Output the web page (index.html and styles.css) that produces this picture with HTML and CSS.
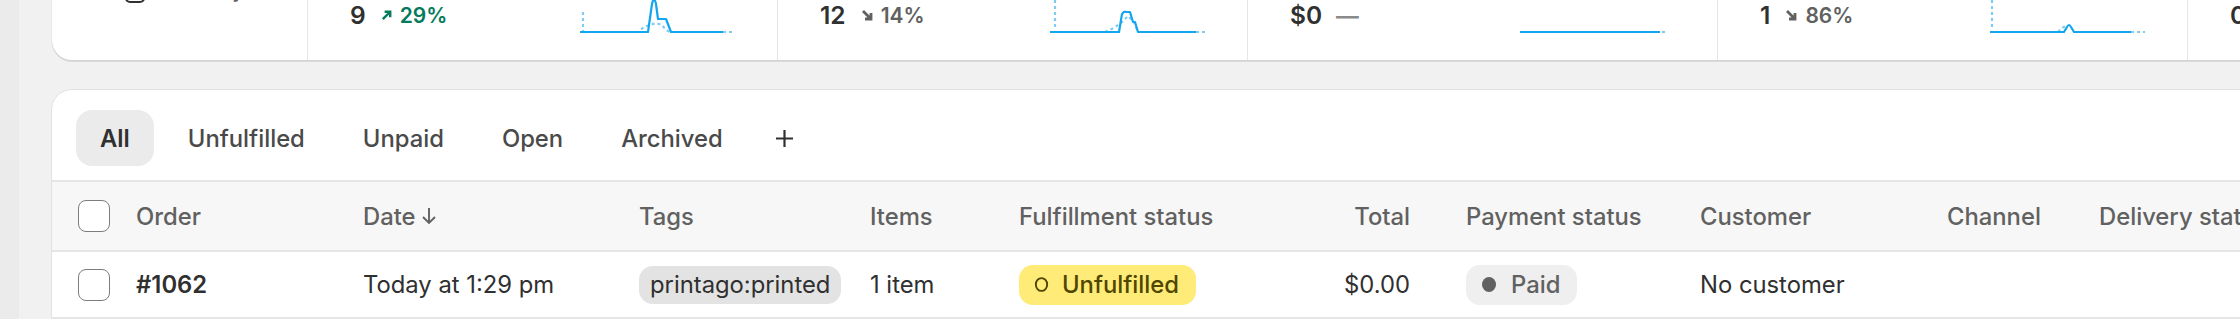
FILE: index.html
```html
<!DOCTYPE html>
<html lang="en">
<head>
<meta charset="utf-8">
<title>Orders</title>
<link rel="stylesheet" href="styles.css">
</head>
<body>
<div class="page">
  <div class="rail"></div>
  <main class="main">
    <section class="card stats">
      <div class="stat first">
        <div class="picker">
          <svg class="cal" viewBox="0 0 22 24" width="22" height="24"><rect x="2" y="3" width="18" height="19" rx="4" fill="none" stroke="#303030" stroke-width="2.2"/></svg>
          <span>Today</span>
        </div>
      </div>
      <div class="stat">
        <div class="figure"><span class="num">9</span><span class="delta up"><svg viewBox="0 0 14 14" width="13" height="13"><path d="M3 11 L10.5 3.5 M5 3 H11 V9" fill="none" stroke="currentColor" stroke-width="2.6"/></svg>29%</span></div>
        <svg class="spark" viewBox="0 0 155 44" width="155" height="44">
          <path class="cmp" d="M3 20 V40"/>
          <path class="cmp" d="M50 40 L58 40 L64 35 L70 33 L76 31 L82 33 L86 38 L90 40"/>
          <path class="cmp" d="M143 40 H155"/>
          <path class="line" d="M0 40 H68 L72 12 Q74 3 76 12 L78 27 H86 L91 40 H143"/>
        </svg>
      </div>
      <div class="stat">
        <div class="figure"><span class="num">12</span><span class="delta down"><svg viewBox="0 0 14 14" width="14" height="14"><path d="M3 3 L10.5 10.5 M11 5 V11 H5" fill="none" stroke="currentColor" stroke-width="2.8"/></svg>14%</span></div>
        <svg class="spark" viewBox="0 0 155 44" width="155" height="44">
          <path class="cmp" d="M5 8 V38"/>
          <path class="cmp" d="M55 40 L64 36 L72 30 L78 24 L84 30 L88 40"/>
          <path class="cmp" d="M146 40 H155"/>
          <path class="line" d="M0 40 H69 L72 22 Q74 19 76 20 H80 L83 30 H85 L88 40 H146"/>
        </svg>
      </div>
      <div class="stat">
        <div class="figure"><span class="num">$0</span><span class="delta flat">—</span></div>
        <svg class="spark" viewBox="0 0 155 44" width="155" height="44">
          <path class="cmp" d="M142 40 H147"/>
          <path class="line" d="M0 40 H140"/>
        </svg>
      </div>
      <div class="stat">
        <div class="figure"><span class="num">1</span><span class="delta down"><svg viewBox="0 0 14 14" width="14" height="14"><path d="M3 3 L10.5 10.5 M11 5 V11 H5" fill="none" stroke="currentColor" stroke-width="2.8"/></svg>86%</span></div>
        <svg class="spark" viewBox="0 0 155 44" width="155" height="44">
          <path class="cmp" d="M2 8 V38"/>
          <path class="cmp" d="M68 40 L72 36 L76 34"/>
          <path class="cmp" d="M141 40 H155"/>
          <path class="line" d="M0 40 H74 L77 35 Q79 31 81 35 L84 40 H141"/>
        </svg>
      </div>
      <div class="stat">
        <div class="figure"><span class="num">0</span></div>
      </div>
    </section>

    <section class="card orders">
      <div class="tabs">
        <div class="tab active">All</div>
        <div class="tab">Unfulfilled</div>
        <div class="tab">Unpaid</div>
        <div class="tab">Open</div>
        <div class="tab">Archived</div>
        <div class="tab add"><svg viewBox="0 0 21 21" width="21" height="21"><path d="M10.5 2 V19 M2 10.5 H19" fill="none" stroke="#303030" stroke-width="2.2"/></svg></div>
      </div>
      <div class="row head">
        <div class="cell check"><span class="box"></span></div>
        <div class="cell">Order</div>
        <div class="cell">Date<svg class="sort" viewBox="0 0 16 20" width="16" height="20"><path d="M8 2 V17 M2 11 L8 17 L14 11" fill="none" stroke="#616161" stroke-width="1.9"/></svg></div>
        <div class="cell">Tags</div>
        <div class="cell">Items</div>
        <div class="cell">Fulfillment status</div>
        <div class="cell num-col">Total</div>
        <div class="cell">Payment status</div>
        <div class="cell">Customer</div>
        <div class="cell">Channel</div>
        <div class="cell">Delivery status</div>
      </div>
      <div class="row body">
        <div class="cell check"><span class="box"></span></div>
        <div class="cell strong">#1062</div>
        <div class="cell">Today at 1:29 pm</div>
        <div class="cell"><span class="tag">printago:printed</span></div>
        <div class="cell">1 item</div>
        <div class="cell"><span class="badge warn"><svg viewBox="0 0 18 18" width="17" height="17"><ellipse cx="9" cy="9" rx="6" ry="6.8" fill="none" stroke="#4f4700" stroke-width="2"/></svg>Unfulfilled</span></div>
        <div class="cell num-col">$0.00</div>
        <div class="cell"><span class="badge paid"><span class="dot"></span>Paid</span></div>
        <div class="cell">No customer</div>
        <div class="cell"></div>
        <div class="cell"></div>
      </div>
    </section>
  </main>
</div>
</body>
</html>
```

FILE: styles.css
```css
* { box-sizing: border-box; margin: 0; padding: 0; }
html, body { width: 2240px; height: 319px; overflow: hidden; }
body {
  background: #f1f1f1;
  font-family: Inter, "Noto Sans", sans-serif;
  font-size: 23.8px;
  color: #303030;
}
.page { display: flex; height: 319px; }
.rail { width: 19px; flex: none; background: #ebebeb; }
.main { flex: 1; min-width: 0; padding-left: 33px; display: flex; flex-direction: column; }

.card { background: #fff; border-radius: 20px; width: 2260px; flex: none; }

/* stats */
.stats {
  margin-top: -62px;
  height: 122px;
  display: flex;
  font-size: 22.75px;
  box-shadow: 0 2px 0 rgba(0,0,0,0.09), 0 0 0 1px rgba(0,0,0,0.04);
}
.stat {
  flex: none;
  width: 470px;
  border-left: 1px solid #e6e6e6;
  display: flex;
  align-items: flex-end;
  padding: 0 0 24px 42px;
}
.stat.first { width: 255px; border-left: 0; align-items: flex-start; padding: 36px 0 0 72px; }
.picker { display: flex; align-items: flex-end; gap: 33px; height: 30px; color: #616161; line-height: 30px; }
.cal { flex: none; }
.figure { display: flex; align-items: center; height: 30px; margin-bottom: 6px; }
.num { font-size: 24.5px; font-weight: 600; color: #303030; margin-right: 14px; }
.delta { display: flex; align-items: center; gap: 7px; font-weight: 600; font-size: 21px; }
.delta.up { color: #047b5d; }
.delta.down { color: #616161; }
.delta.flat { color: #8a8a8a; font-size: 22.75px; }
.spark { flex: none; margin-left: auto; margin-right: 42px; overflow: visible; }
.spark .line { fill: none; stroke: #14a5ef; stroke-width: 2.2; stroke-linejoin: round; }
.spark .cmp { fill: none; stroke: #7fcbf3; stroke-width: 2.2; stroke-dasharray: 3 3; }

/* orders card */
.orders {
  margin-top: 30px;
  border-radius: 20px 20px 0 0;
  box-shadow: 0 0 0 1px rgba(0,0,0,0.06);
  overflow: hidden;
}
.tabs {
  display: flex;
  align-items: center;
  gap: 10px;
  height: 92px;
  padding: 6px 0 0 24px;
  border-bottom: 2px solid #e6e6e6;
}
.tab {
  height: 56px;
  padding: 0 24px;
  border-radius: 16px;
  display: flex;
  align-items: center;
  font-weight: 500;
  color: #4a4a4a;
}
.tab.active { background: #ebebeb; color: #303030; font-weight: 600; }
.tab.add { padding: 0 8px 0 17px; }

.row {
  display: grid;
  grid-template-columns: 84px 227px 276px 231px 149px 231px 216px 234px 247px 152px 1fr;
  border-bottom: 2px solid #e6e6e6;
}
.row.head { height: 70px; background: #f7f7f7; color: #616161; font-weight: 500; }
.row.body { height: 67px; }
.cell { display: flex; align-items: center; white-space: nowrap; min-width: 0; }
.cell.check { padding-left: 26px; }
.cell.num-col { justify-content: flex-end; padding-right: 56px; }
.cell.strong { font-weight: 600; }
.sort { margin-left: 5px; }
.box {
  width: 32px; height: 32px;
  border: 1px solid #7d7d7d;
  border-radius: 8px;
  background: #fff;
}
.tag {
  display: inline-flex; align-items: center;
  height: 38px; padding: 0 11px;
  border-radius: 14px;
  background: #e3e3e3;
}
.badge {
  display: inline-flex; align-items: center;
  height: 40px;
  border-radius: 14px;
  font-weight: 500;
}
.badge.warn { background: #ffeb78; color: #4f4700; padding: 0 17px 0 14px; gap: 12px; }
.badge.paid { background: #efefef; color: #616161; padding: 0 17px 0 16px; gap: 15px; }
.dot { width: 14px; height: 15px; border-radius: 50%; background: #616161; }
```
